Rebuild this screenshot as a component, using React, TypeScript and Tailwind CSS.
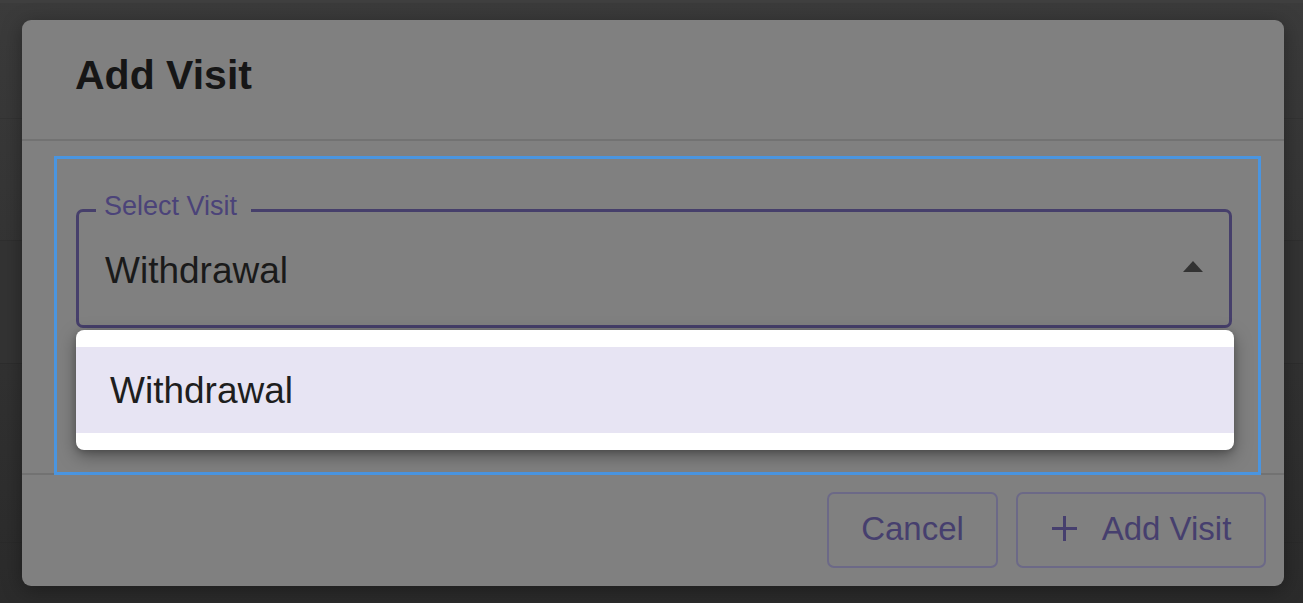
import React from "react";

export default function App() {
  return (
    <div
      className="relative w-[1303px] h-[603px] overflow-hidden bg-gradient-to-b from-[#3b3b3b] to-[#2b2b2b]"
      style={{ fontFamily: '"Liberation Sans", Arial, sans-serif' }}
    >
      {/* page content behind the overlay */}
      <div className="flex flex-col">
        <div className="h-[3px] bg-[#3f3f3f]" />
        <div className="h-[116px] border-b border-[#333333]" />
        <div className="h-[122px] border-b border-[#2f2f2f]" />
        <div className="h-[123px] border-b border-[#2d2d2d] bg-[#333333]" />
        <div className="h-[179px] border-b border-[#2a2a2a]" />
      </div>

      {/* dialog */}
      <div className="absolute left-[22px] top-[20px] w-[1262px] h-[566px] rounded-[9px] bg-[#808080] flex flex-col shadow-[0_4px_20px_rgba(0,0,0,0.35)]">
        <div className="h-[121px] shrink-0 border-b-2 border-[#727272] flex items-center px-[53px] pb-[8px]">
          <h2 className="text-[41px] leading-none font-bold text-[#161616]">Add Visit</h2>
        </div>

        <div className="h-[334px] shrink-0 pt-[15px] pl-[32px]">
          <div className="relative z-10 w-[1207px] h-[319px] border-[3px] border-[#4a95e0] pl-[19px] pt-[50px]">
            <div className="relative w-[1158px]">
              <div className="relative w-[1156px] h-[119px] border-[3px] border-[#463f6b] rounded-[7px] flex items-center justify-between pl-[26px] pr-[26px]">
                <span className="absolute left-[17px] top-[-21px] h-[30px] flex items-center bg-[#808080] pl-[8px] pr-[14px] text-[27px] leading-none text-[#4b4379]">
                  Select Visit
                </span>
                <span className="text-[37px] leading-none text-[#1a1a1a] pt-[3px]">Withdrawal</span>
                <svg width="20" height="11" viewBox="0 0 20 11" className="mt-[-4px]">
                  <path d="M10 0 L20 11 L0 11 Z" fill="#333333" />
                </svg>
              </div>

              <div className="absolute left-0 top-[121px] w-[1158px] h-[120px] rounded-[8px] bg-white py-[17px] shadow-[0_6px_18px_rgba(0,0,0,0.35),0_2px_6px_rgba(0,0,0,0.2)]">
                <div className="h-[86px] bg-[#e7e4f3] flex items-center pl-[34px]">
                  <span className="text-[37px] leading-none text-[#1e1e1e]">Withdrawal</span>
                </div>
              </div>
            </div>
          </div>
        </div>

        <div className="flex-1 border-t-2 border-[#727272] mt-[-2px] flex justify-end items-start pt-[17px] pr-[18px] gap-[18px]">
          <button className="w-[171px] h-[76px] rounded-[7px] border-2 border-[#6c6987] flex items-center justify-center pb-[3px] text-[33px] leading-none text-[#463f6e]">
            Cancel
          </button>
          <button className="w-[250px] h-[76px] rounded-[7px] border-2 border-[#6c6987] flex items-center justify-center gap-[24px] pb-[3px] text-[33px] leading-none text-[#463f6e]">
            <svg width="27" height="27" viewBox="0 0 27 27">
              <path d="M13.5 1 V26 M1 13.5 H26" stroke="#463f6e" strokeWidth="3" />
            </svg>
            <span>Add Visit</span>
          </button>
        </div>
      </div>
    </div>
  );
}
